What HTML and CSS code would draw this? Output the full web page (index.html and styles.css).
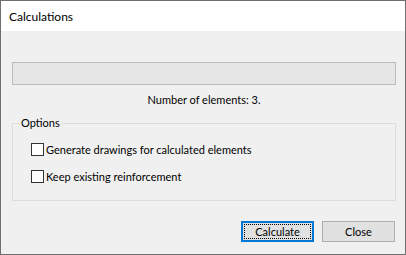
FILE: index.html
```html
<!DOCTYPE html>
<html lang="en">
  <head>
    <meta charset="UTF-8" />
    <meta name="viewport" content="width=device-width, initial-scale=1.0" />
    <link rel="stylesheet" href="styles.css">
    <title>Calculations</title>
  </head>
  <body>
    <div class="window">
      <div class="titlebar">Calculations</div>
      <div class="content">
        <div class="progress"></div>
        <div class="count">Number of elements: 3.</div>
        <fieldset class="options">
          <legend>Options</legend>
          <label class="check"><span class="box"></span>Generate drawings for calculated elements</label>
          <label class="check"><span class="box"></span>Keep existing reinforcement</label>
        </fieldset>
        <div class="buttons">
          <button class="btn default">Calculate</button>
          <button class="btn">Close</button>
        </div>
      </div>
    </div>
  </body>
</html>
```

FILE: styles.css
```css
body {
  margin: 0;
  font-family: Lato, "Liberation Sans", sans-serif;
  font-size: 11px;
  color: #000;
}

.window {
  width: 406px;
  height: 255px;
  box-sizing: border-box;
  border: 1px solid #6f6f6f;
  background-color: #f0f0f0;
  display: flex;
  flex-direction: column;
}

.titlebar {
  height: 30px;
  background-color: #fff;
  padding-left: 8px;
  line-height: 31px;
  font-size: 12px;
}

.content {
  padding: 31px 9px 0 11px;
  display: flex;
  flex-direction: column;
}

.progress {
  width: 382px;
  height: 21px;
  border: 1px solid #bcbcbc;
  background-color: #e6e6e6;
}

.count {
  text-align: center;
  margin-top: 7px;
  height: 17px;
  line-height: 16px;
}

.options {
  margin: 7px 0 0 0;
  padding: 11px 0 15px 0;
  width: 382px;
  border: 1px solid #dcdcdc;
  box-sizing: content-box;
}

.options legend {
  padding: 0 1px;
  margin-left: 7px;
  line-height: 14px;
}

.check {
  display: flex;
  align-items: center;
  height: 17px;
  margin-left: 18px;
}

.check + .check {
  margin-top: 10px;
}

.box {
  width: 11px;
  height: 11px;
  border: 1px solid #333;
  background-color: #fff;
  margin-right: 2px;
}

.buttons {
  display: flex;
  justify-content: flex-end;
  gap: 8px;
  margin-top: 20px;
  padding-right: 1px;
}

.btn {
  width: 73px;
  height: 21px;
  font-family: inherit;
  font-size: 11px;
  color: #000;
  background-color: #e1e1e1;
  border: 1px solid #adadad;
  padding: 0;
}

.btn.default {
  border: 2px solid #0078d7;
  outline: 1px dotted #000;
  outline-offset: -4px;
}
```
